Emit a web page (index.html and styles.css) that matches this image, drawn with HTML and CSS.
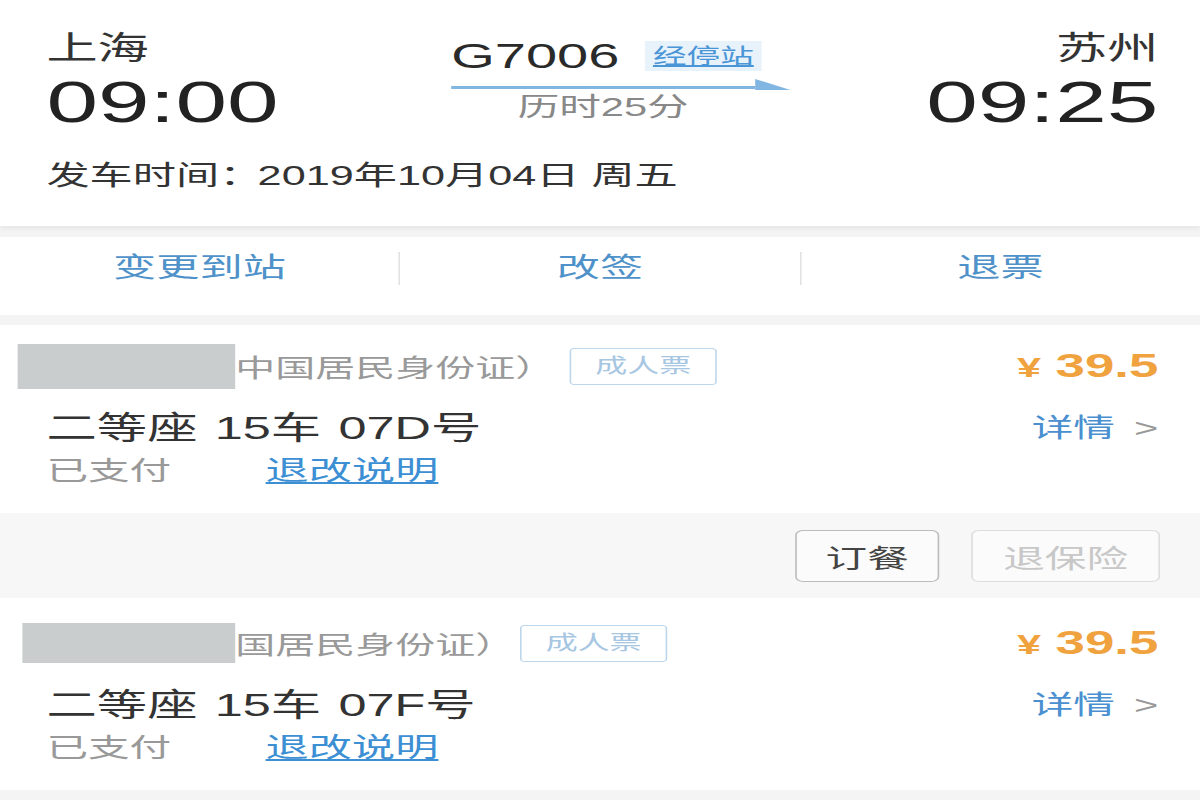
FILE: index.html
```html
<!DOCTYPE html>
<html lang="zh-CN">
<head>
    <meta charset="UTF-8">
    <meta name="viewport" content="width=device-width, initial-scale=1.0">
    <title>订单详情</title>
    <link rel="stylesheet" href="styles.css">
</head>
<body>
    <div class="screen">
        <section class="trip">
            <div class="trip-row">
                <div class="station">
                    <div class="city">上海</div>
                    <div class="time">09:00</div>
                </div>
                <div class="train">
                    <div class="train-top">
                        <span class="train-no">G7006</span>
                        <span class="stops">经停站</span>
                    </div>
                    <div class="arrow"><span class="arrow-line"></span><span class="arrow-head"></span></div>
                    <div class="duration">历时25分</div>
                </div>
                <div class="station end">
                    <div class="city">苏州</div>
                    <div class="time">09:25</div>
                </div>
            </div>
            <div class="depart">发车时间<span class="colon">：</span>2019年10月04日 周五</div>
        </section>

        <nav class="actions">
            <a class="action">变更到站</a>
            <span class="sep"></span>
            <a class="action">改签</a>
            <span class="sep"></span>
            <a class="action">退票</a>
        </nav>

        <section class="ticket">
            <div class="ticket-head">
                <span class="mask"></span>
                <span class="id-type">中国居民身份证）</span>
                <span class="tag">成人票</span>
                <span class="price"><span class="yen">¥</span> 39.5</span>
            </div>
            <div class="seat-row">
                <span class="seat">二等座 15车 07D号</span>
                <a class="detail">详情<span class="chev">&gt;</span></a>
            </div>
            <div class="pay-row">
                <span class="paid">已支付</span>
                <a class="rules">退改说明</a>
            </div>
        </section>

        <div class="extras">
            <button class="btn">订餐</button>
            <button class="btn off">退保险</button>
        </div>

        <section class="ticket second">
            <div class="ticket-head">
                <span class="mask"></span>
                <span class="id-type">国居民身份证）</span>
                <span class="tag">成人票</span>
                <span class="price"><span class="yen">¥</span> 39.5</span>
            </div>
            <div class="seat-row">
                <span class="seat">二等座 15车 07F号</span>
                <a class="detail">详情<span class="chev">&gt;</span></a>
            </div>
            <div class="pay-row">
                <span class="paid">已支付</span>
                <a class="rules">退改说明</a>
            </div>
        </section>
    </div>
</body>
</html>
```

FILE: styles.css
```css
body {
    margin: 0;
    background: #f4f4f4;
    font-family: "Liberation Sans", "Noto Sans CJK SC", sans-serif;
    color: #333;
    overflow: hidden;
}
/* the phone shot is stretched sideways, so lay out at 750 and widen */
.screen {
    width: 750px;
    height: 800px;
    transform: scaleX(1.6);
    transform-origin: left top;
}

.trip {
    background: #fff;
    padding: 28px 26px 32px 29px;
    box-shadow: 0 2px 4px rgba(0, 0, 0, 0.07);
}
.trip-row {
    display: flex;
}
.station {
    width: 253px;
}
.station.end {
    flex: 1;
    text-align: right;
}
.city {
    font-size: 32px;
    line-height: 40px;
    color: #333;
}
.time {
    font-size: 58px;
    line-height: 60px;
    margin-top: 4px;
    color: #222;
}
.train {
    width: 212px;
    padding-top: 8px;
}
.train-top {
    display: flex;
    align-items: center;
    height: 40px;
}
.train-no {
    font-size: 35px;
    line-height: 40px;
    color: #2a2a2a;
}
.stops {
    margin-left: 16px;
    padding: 0 5px;
    background: #e8f2fb;
    font-size: 21px;
    line-height: 30px;
    color: #4a95d6;
    text-decoration: underline;
}
.arrow {
    display: flex;
    align-items: flex-end;
    height: 12px;
    margin-top: 2px;
}
.arrow-line {
    width: 190px;
    height: 3px;
    margin-bottom: 1px;
    background: #82b6e2;
}
.arrow-head {
    width: 0;
    height: 0;
    border-bottom: 11px solid #82b6e2;
    border-right: 22px solid transparent;
}
.duration {
    width: 190px;
    text-align: center;
    margin-top: 2px;
    font-size: 26px;
    line-height: 30px;
    color: #888;
}
.depart {
    height: 36px;
    margin-top: 26px;
    font-size: 27px;
    line-height: 36px;
    color: #333;
}
.colon {
    font-family: "Noto Sans CJK JP", sans-serif;
    line-height: 0;
    margin-right: -3px;
}

.actions {
    display: flex;
    align-items: center;
    margin-top: 11px;
    background: #fff;
    padding: 11px 0 27px;
}
.action {
    flex: 1;
    text-align: center;
    font-size: 27px;
    line-height: 40px;
    color: #4f92c9;
}
.sep {
    width: 1px;
    height: 33px;
    background: #e2e2e2;
}

.ticket {
    margin-top: 10px;
    background: #fff;
    padding: 18px 26px 28px 29px;
}
.ticket.second {
    margin-top: 0;
    padding-top: 22px;
}
.ticket-head {
    display: flex;
    align-items: center;
    height: 46px;
}
.mask {
    width: 136px;
    height: 45px;
    margin-left: -18px;
    background: #c9cdcd;
}
.second .mask {
    width: 133px;
    height: 40px;
    margin-left: -15px;
}
.id-type {
    font-size: 25px;
    color: #999;
}
.tag {
    margin-left: 9px;
    width: 90px;
    height: 35px;
    border: 1px solid #bcd6ec;
    border-radius: 3px;
    text-align: center;
    font-size: 20px;
    line-height: 35px;
    color: #a6c6e2;
}
.second .tag {
    margin-left: 3px;
}
.price {
    margin-left: auto;
    font-size: 33px;
    font-weight: bold;
    color: #f0a23e;
}
.yen {
    font-size: 27px;
}
.seat-row {
    display: flex;
    justify-content: space-between;
    align-items: center;
    margin-top: 16px;
    height: 40px;
}
.seat {
    font-size: 31.5px;
    word-spacing: 2px;
    color: #333;
}
.detail {
    font-size: 26px;
    color: #4a8fcf;
}
.chev {
    margin-left: 12px;
    color: #999;
}
.pay-row {
    display: flex;
    align-items: center;
    margin-top: 6px;
    height: 34px;
}
.paid {
    width: 137px;
    font-size: 26px;
    color: #999;
}
.rules {
    font-size: 27px;
    color: #3d8fd4;
    text-decoration: underline;
}

.extras {
    display: flex;
    justify-content: flex-end;
    gap: 20px;
    background: #f7f7f7;
    padding: 17px 25px 16px;
}
.btn {
    height: 52px;
    padding: 0 18px;
    background: #fbfbfb;
    border: 1px solid #bbb;
    border-radius: 5px;
    font-family: inherit;
    font-size: 26px;
    color: #444;
}
.btn.off {
    padding: 0 19px;
    border-color: #ddd;
    color: #c8c8c8;
}
```
